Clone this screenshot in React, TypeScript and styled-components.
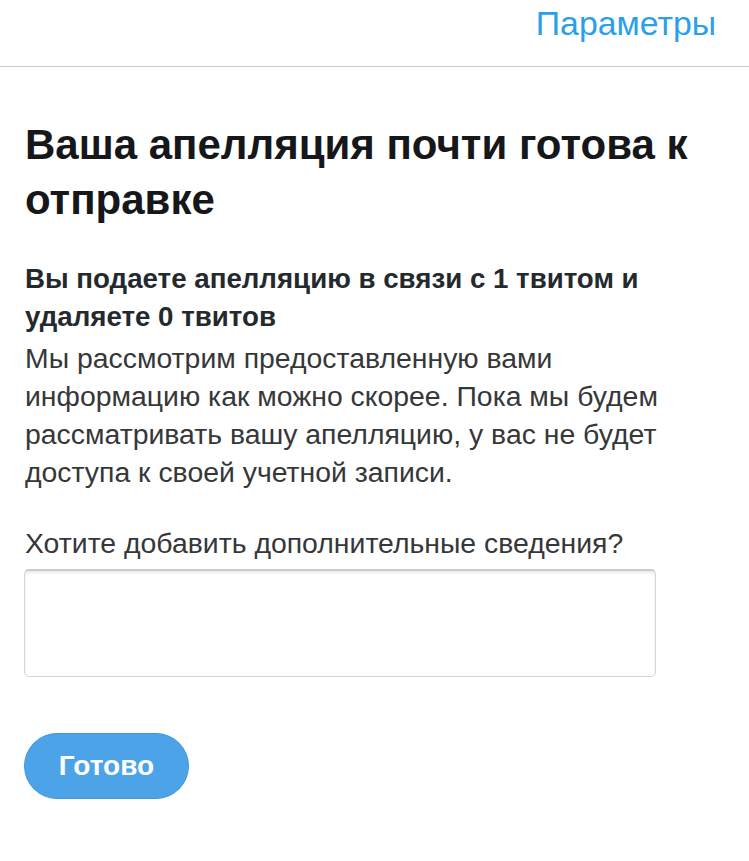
import React from "react";
import styled, { createGlobalStyle } from "styled-components";

const Global = createGlobalStyle`
  html, body { margin: 0; padding: 0; background: #ffffff; }
  body { font-family: "Liberation Sans", Arial, Helvetica, sans-serif; -webkit-font-smoothing: antialiased; }
  * { box-sizing: border-box; }
`;

const Page = styled.div`
  width: 749px;
  min-height: 861px;
  background: #ffffff;
`;

const Header = styled.header`
  height: 67px;
  display: flex;
  align-items: center;
  justify-content: flex-end;
  padding: 0 33px 20px 0;
  border-bottom: 1px solid #c9c9cc;
`;

const HeaderLink = styled.a`
  color: #2b9fea;
  font-size: 33.8px;
  line-height: 38px;
  text-decoration: none;
`;

const Main = styled.main`
  display: flex;
  flex-direction: column;
  align-items: flex-start;
  padding: 50px 25px 0 24px;
`;

const Title = styled.h1`
  margin: 0 0 0 1px;
  font-size: 42px;
  line-height: 55px;
  font-weight: 700;
  color: #15171a;
  max-width: 700px;
`;

const Lead = styled.p`
  margin: 33px 0 0 1px;
  font-size: 27.7px;
  line-height: 38px;
  font-weight: 700;
  color: #24292e;
  max-width: 690px;
`;

const Body = styled.p<{ $gap?: number }>`
  margin: ${(p) => p.$gap ?? 0}px 0 0 1px;
  font-size: 28.4px;
  line-height: 38px;
  font-weight: 400;
  color: #363739;
  max-width: 690px;
`;

const TextArea = styled.textarea`
  margin-top: 7px;
  width: 632px;
  height: 108px;
  border: 1px solid #d3d5d8;
  border-top: 2px solid #c8cbcf;
  border-radius: 5px;
  box-shadow: inset 0 2px 3px rgba(0, 0, 0, 0.08);
  resize: none;
  outline: none;
  font-family: inherit;
  font-size: 24px;
  padding: 10px;
  background: #ffffff;
`;

const Button = styled.button`
  margin-top: 56px;
  width: 165px;
  height: 66px;
  border: 1px solid #3f97dc;
  border-radius: 33px;
  background: #4ca3e7;
  color: #ffffff;
  font-family: inherit;
  font-size: 28px;
  font-weight: 700;
  cursor: pointer;
`;

export default function App() {
  return (
    <>
      <Global />
      <Page>
        <Header>
          <HeaderLink href="#">Параметры</HeaderLink>
        </Header>
        <Main>
          <Title>Ваша апелляция почти готова к отправке</Title>
          <Lead>Вы подаете апелляцию в связи с 1 твитом и удаляете 0 твитов</Lead>
          <Body $gap={3}>
            Мы рассмотрим предоставленную вами информацию как можно скорее. Пока мы будем
            рассматривать вашу апелляцию, у вас не будет доступа к своей учетной записи.
          </Body>
          <Body $gap={33}>Хотите добавить дополнительные сведения?</Body>
          <TextArea aria-label="Дополнительные сведения" />
          <Button>Готово</Button>
        </Main>
      </Page>
    </>
  );
}
